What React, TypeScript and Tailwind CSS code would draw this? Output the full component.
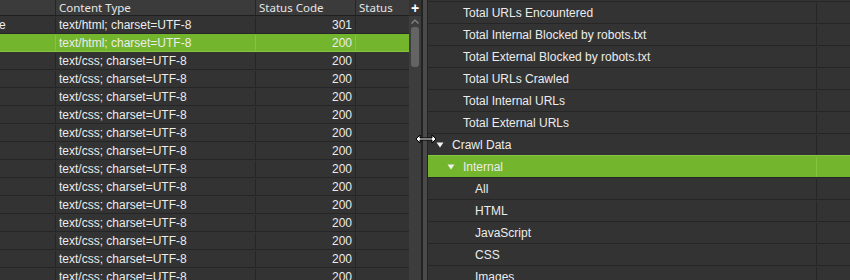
const leftRows = [
  { type: "text/html; charset=UTF-8", code: "301", first: "e" },
  { type: "text/html; charset=UTF-8", code: "200", active: true },
  ...Array.from({ length: 13 }, () => ({ type: "text/css; charset=UTF-8", code: "200" })),
] as { type: string; code: string; first?: string; active?: boolean }[];

const rightRows: { label: string; level: number; open?: boolean; active?: boolean }[] = [
  { label: "Total URLs Encountered", level: 2 },
  { label: "Total Internal Blocked by robots.txt", level: 2 },
  { label: "Total External Blocked by robots.txt", level: 2 },
  { label: "Total URLs Crawled", level: 2 },
  { label: "Total Internal URLs", level: 2 },
  { label: "Total External URLs", level: 2 },
  { label: "Crawl Data", level: 1, open: true },
  { label: "Internal", level: 2, open: true, active: true },
  { label: "All", level: 3 },
  { label: "HTML", level: 3 },
  { label: "JavaScript", level: 3 },
  { label: "CSS", level: 3 },
  { label: "Images", level: 3 },
];

// text x offset inside the tree, per level
const indent = [0, 24, 35, 47];

function Caret() {
  return (
    <svg width="8" height="6" viewBox="0 0 8 6" className="mr-[8px] shrink-0">
      <path d="M0.5 0.5 L7.5 0.5 L4 5.5 Z" fill="#f2f2f2" />
    </svg>
  );
}

function ResizeCursor() {
  return (
    <svg
      width="22"
      height="10"
      viewBox="0 0 22 10"
      className="pointer-events-none absolute left-[415px] top-[134px]"
    >
      <path
        d="M1 5 L5 1 L5 4 L17 4 L17 1 L21 5 L17 9 L17 6 L5 6 L5 9 Z"
        fill="#ffffff"
        stroke="#000000"
        strokeWidth="1"
      />
    </svg>
  );
}

export default function App() {
  return (
    <div
      className="relative flex h-[280px] w-[850px] overflow-hidden bg-[#333333] text-[12px] text-[#ececec]"
      style={{ fontFamily: '"Liberation Sans", Arial, sans-serif' }}
    >
      {/* left table */}
      <div className="flex w-[421px] shrink-0">
        <div className="flex w-[409px] flex-col">
          <div
            className="flex h-[16px] shrink-0 border-b border-[#1f1f1f] bg-[#3b3b3b] text-[11.5px] leading-[15px] text-[#e6e6e6]"
            style={{ fontFamily: '"Noto Sans", "Open Sans", sans-serif' }}
          >
            <div className="w-[56px] border-r border-[#262626]" />
            <div className="w-[200px] border-r border-[#262626] pl-[3px]">Content Type</div>
            <div className="w-[100px] border-r border-[#262626] pl-[3px]">Status Code</div>
            <div className="flex-1 pl-[3px]">Status</div>
          </div>
          {leftRows.map((r, i) => (
            <div
              key={i}
              className={`flex h-[18px] shrink-0 border-b pt-[1px] leading-[16px] ${
                r.active ? "border-[#86c440] bg-[#73b52d]" : "border-[#262626] bg-[#333333]"
              }`}
            >
              <div
                className={`w-[56px] overflow-hidden border-r ${r.active ? "border-[#86c440]" : "border-[#262626]"}`}
              >
                {r.first && <span className="-ml-[1px]">{r.first}</span>}
              </div>
              <div
                className={`w-[200px] border-r pl-[3px] ${r.active ? "border-[#86c440]" : "border-[#262626]"}`}
              >
                {r.type}
              </div>
              <div
                className={`w-[100px] border-r pr-[3px] text-right ${r.active ? "border-[#86c440]" : "border-[#262626]"}`}
              >
                {r.code}
              </div>
              <div className="flex-1" />
            </div>
          ))}
        </div>
        {/* scrollbar */}
        <div className="flex w-[12px] flex-col bg-[#3d3d3d]">
          <div className="flex h-[16px] items-center justify-center border-b border-[#2a2a2a] bg-[#333333] text-[14px] font-bold leading-none text-white">
            +
          </div>
          <div className="flex h-[11px] items-center justify-center">
            <svg width="8" height="5" viewBox="0 0 8 5">
              <path d="M0.5 4.5 L4 1 L7.5 4.5" fill="none" stroke="#8a8a8a" strokeWidth="1.2" />
            </svg>
          </div>
          <div className="mx-[2px] h-[40px] rounded-[3px] bg-[#646464]" />
        </div>
      </div>

      {/* splitter */}
      <div className="flex w-[7px] shrink-0">
        <div className="w-[2px] bg-[#232323]" />
        <div className="w-[4px] bg-[#4a4a4a]" />
        <div className="w-[1px] bg-[#232323]" />
      </div>

      {/* right tree */}
      <div className="flex flex-1 flex-col">
        <div className="h-[1px] shrink-0" />
        {rightRows.map((r, i) => (
          <div
            key={i}
            className={`flex h-[22px] shrink-0 border-t pt-[1px] leading-[20px] ${
              r.active ? "border-[#86c440] bg-[#73b52d]" : "border-[#262626]"
            }`}
          >
            <div
              className={`flex w-[389px] items-center border-r ${r.active ? "border-[#86c440]" : "border-[#262626]"}`}
              style={{ paddingLeft: indent[r.level] - (r.open ? 16 : 0) }}
            >
              {r.open && <Caret />}
              <span>{r.label}</span>
            </div>
            <div className="flex-1" />
          </div>
        ))}
      </div>

      <ResizeCursor />
    </div>
  );
}
